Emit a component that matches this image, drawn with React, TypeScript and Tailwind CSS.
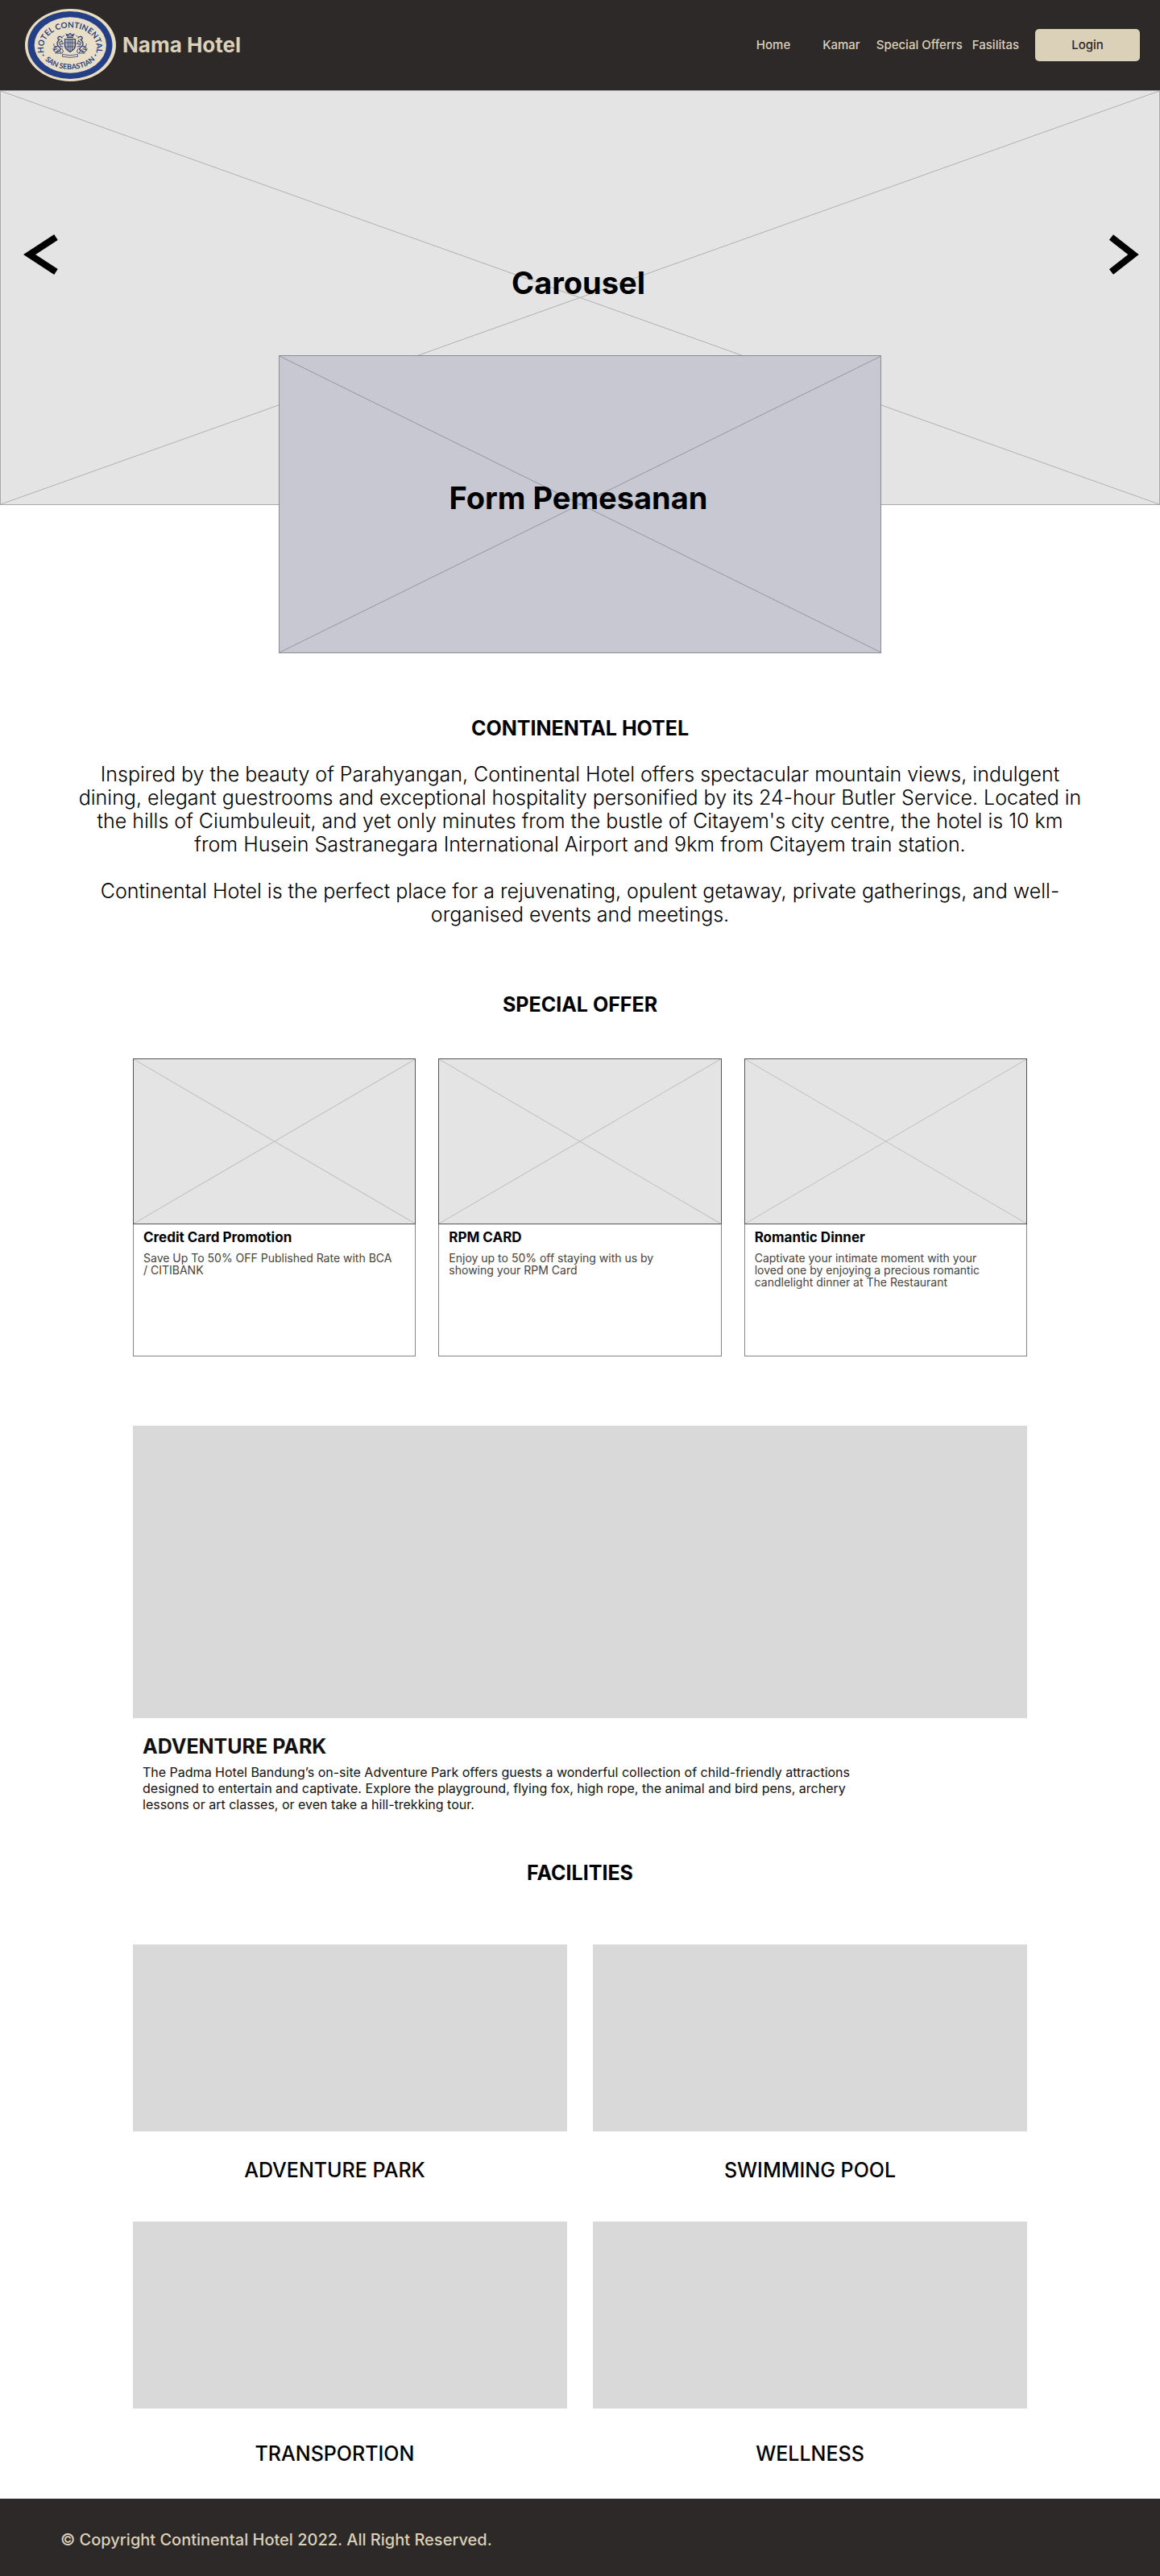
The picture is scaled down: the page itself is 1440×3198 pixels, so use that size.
import type { ReactNode } from "react";

const NAV = [
  { label: "Home", gap: "mr-10" },
  { label: "Kamar", gap: "mr-5" },
  { label: "Special Offerrs", gap: "mr-3" },
  { label: "Fasilitas", gap: "mr-5" },
];

const OFFERS = [
  { title: "Credit Card Promotion", lines: ["Save Up To 50% OFF Published Rate with BCA", "/ CITIBANK"] },
  { title: "RPM CARD", lines: ["Enjoy up to 50% off staying with us by", "showing your RPM Card"] },
  {
    title: "Romantic Dinner",
    lines: [
      "Captivate your intimate moment with your",
      "loved one by enjoying a precious romantic",
      "candlelight dinner at The Restaurant",
    ],
  },
];

const ABOUT = [
  [
    "Inspired by the beauty of Parahyangan, Continental Hotel offers spectacular mountain views, indulgent",
    "dining, elegant guestrooms and exceptional hospitality personified by its 24-hour Butler Service. Located in",
    "the hills of Ciumbuleuit, and yet only minutes from the bustle of Citayem's city centre, the hotel is 10 km",
    "from Husein Sastranegara International Airport and 9km from Citayem train station.",
  ],
  [
    "Continental Hotel is the perfect place for a rejuvenating, opulent getaway, private gatherings, and well-",
    "organised events and meetings.",
  ],
];

const PARK = [
  "The Padma Hotel Bandung’s on-site Adventure Park offers guests a wonderful collection of child-friendly attractions",
  "designed to entertain and captivate. Explore the playground, flying fox, high rope, the animal and bird pens, archery",
  "lessons or art classes, or even take a hill-trekking tour.",
];

function Lines({ lines }: { lines: string[] }) {
  return (
    <>
      {lines.map((line) => (
        <span key={line} className="block">
          {line}
        </span>
      ))}
    </>
  );
}

function Cross({ className }: { className: string }) {
  return (
    <svg className={`absolute inset-0 size-full ${className}`} viewBox="0 0 100 100" preserveAspectRatio="none" aria-hidden="true">
      <path d="M0 0 100 100M100 0 0 100" stroke="currentColor" fill="none" vectorEffect="non-scaling-stroke" />
    </svg>
  );
}

function SectionTitle({ children }: { children: ReactNode }) {
  return <h2 className="text-center text-[25px] leading-8 font-bold">{children}</h2>;
}

function Lion() {
  return (
    <g fill="none" stroke="#2c3a6e" strokeLinecap="round" strokeLinejoin="round">
      <path d="M77 47c-1.500-2-4-2-5-.4-.8 1.600.6 2.600 2 2.400M74 49c-2.500 2-3.500 4-2.800 6.500.8 2.500 3.200 3 4.300 5.500" strokeWidth="1.300" />
      <path d="M77 51l-3 1.500M79 54l-4.500 1M78 58l-3-.5M72 57c-2.500.5-4.500 3-4.500 5M75 61c-1 2.500-3 3.500-5.500 3.600M71 60c-1.500 1.800-2.500 2.300-4 2" strokeWidth="1.100" />
      <path d="M70 58c-3-.4-4.200-2-3-3.500M69 66h7M74 63l2 3M76 49.500l1.500 3.500M73 53l2 3.500" strokeWidth=".9" />
      <path d="M78 45.500l1.500-1.500M66 60.500c.3 2.300 1.600 4 3.500 4.500M72.500 61.500l-1.500 2M77 60.500l1.500 3.500-1.500 2M68.500 57.500l-1.800 1.500" strokeWidth=".9" />
    </g>
  );
}

function Logo() {
  return (
    <svg className="h-[90px] w-[113px] shrink-0" viewBox="31 11 113 90" role="img" aria-label="Hotel Continental San Sebastian">
      <defs>
        <path id="logo-top" d="M54.500 66C51 46 67 34.500 87 34.500S123 46 119.500 66" />
        <path id="logo-bottom" d="M54 72C62 82 74 86 87 86S112 82 120 72" />
      </defs>
      <ellipse cx="87.500" cy="56" rx="56.500" ry="45" fill="#e9ddc0" />
      <ellipse cx="87" cy="56" rx="52.500" ry="42" fill="#243f86" />
      <ellipse cx="87.300" cy="56" rx="44.700" ry="34.700" fill="#e9dfc8" />
      <g fill="#2a3f80" fontFamily="Lato" fontWeight="700" textAnchor="middle">
        <text fontSize="10">
          <textPath href="#logo-top" startOffset="50%">HOTEL CONTINENTAL</textPath>
        </text>
        <text fontSize="9">
          <textPath href="#logo-bottom" startOffset="50%">SAN SEBASTIAN</textPath>
        </text>
      </g>
      <circle cx="53.700" cy="68.500" r="1" fill="#2a3f80" />
      <circle cx="118.500" cy="68.500" r="1" fill="#2a3f80" />
      <Lion />
      <g transform="matrix(-1 0 0 1 174 0)">
        <Lion />
      </g>
      <g fill="none" stroke="#2c3a6e">
        <path d="M83 46.500h8M83.500 45l-1.200-2.500 2.400 1 2.300-2 2.300 2 2.400-1-1.200 2.500z" strokeWidth="1.100" />
        <path d="M80.500 48.500h13v8.500c0 3.500-3 5.500-6.500 7.500-3.500-2-6.500-4-6.500-7.500z" fill="#b4b1b2" strokeWidth="1.200" />
        <path d="M84.500 49v13M87 49v15M89.500 49v13M81 53h12M81 58h12" strokeWidth=".7" />
        <path d="M77.500 67.500q9.500 2.500 19 0v2.800q-9.500 2-19 0z" strokeWidth=".8" />
      </g>
    </svg>
  );
}

function Facility({ name, className }: { name: string; className: string }) {
  return (
    <figure>
      <div className="h-[232px] bg-[#d9d9d9]" />
      <figcaption className={`flex h-28 items-center justify-center text-[25px] leading-8 font-medium ${className}`}>{name}</figcaption>
    </figure>
  );
}

export default function App() {
  return (
    <div className="min-h-screen bg-white font-['Inter',sans-serif] text-black">
      <header className="flex h-28 items-center justify-between bg-[#2d2928] pr-[25px] pl-[31px] text-[#dbd0b8]">
        <a href="#home" className="flex items-center gap-2">
          <Logo />
          <span className="text-[26px] leading-8 font-bold">Nama Hotel</span>
        </a>
        <nav className="flex items-center text-[15px] font-medium">
          {NAV.map((item) => (
            <a key={item.label} href="#menu" className={item.gap}>
              {item.label}
            </a>
          ))}
          <button type="button" className="h-10 w-[130px] rounded-[5px] bg-[#dbd0b8] text-[#2d2928]">
            Login
          </button>
        </nav>
      </header>

      <main>
        <section className="relative flex h-[515px] items-center justify-between border border-[#a9a9a9] bg-[#e4e4e4] pr-6 pb-[107px] pl-7">
          <Cross className="text-[#b0b0b0]" />
          <button type="button" aria-label="Previous" className="relative">
            <svg className="h-[50px] w-11" viewBox="0 0 44 50" fill="none" stroke="black" strokeWidth="8.300" aria-hidden="true">
              <path d="M40.500 3.500 7.500 25l33 21.500" />
            </svg>
          </button>
          <h1 className="relative pt-[70px] pr-2 text-[38px] leading-[46px] font-bold">Carousel</h1>
          <button type="button" aria-label="Next" className="relative">
            <svg className="h-[50px] w-11" viewBox="0 0 44 50" fill="none" stroke="black" strokeWidth="8.300" aria-hidden="true">
              <path d="M8.500 3.500 36 25 8.500 46.500" />
            </svg>
          </button>
        </section>

        <section className="relative mx-auto -mt-[186px] flex h-[370px] w-[52%] items-center justify-center border border-[#8c8c95] bg-[#c8c8d2] pr-1 pb-4">
          <Cross className="text-[#96969f]" />
          <h2 className="relative text-[38px] leading-[46px] font-bold">Form Pemesanan</h2>
        </section>

        <section className="mt-[77px]">
          <SectionTitle>CONTINENTAL HOTEL</SectionTitle>
          <div className="mt-[27px] space-y-[29px] text-center text-[25px] leading-[29px] font-light">
            {ABOUT.map((lines) => (
              <p key={lines[0]}>
                <Lines lines={lines} />
              </p>
            ))}
          </div>
        </section>

        <section className="mx-auto mt-[81px] max-w-[1110px]">
          <SectionTitle>SPECIAL OFFER</SectionTitle>
          <div className="mt-[51px] grid grid-cols-3 gap-7">
            {OFFERS.map((offer) => (
              <article key={offer.title} className="h-[370px] border border-[#858585]">
                <div className="relative -mx-px -mt-px h-[206px] border border-[#555555] bg-[#e4e4e4]">
                  <Cross className="text-[#c0c0c0]" />
                </div>
                <div className="px-3 pt-1.5">
                  <h3 className="text-[17px] leading-5 font-bold">{offer.title}</h3>
                  <p className="mt-2 text-[14px] leading-[15px] whitespace-nowrap text-[#444444]">
                    <Lines lines={offer.lines} />
                  </p>
                </div>
              </article>
            ))}
          </div>
        </section>

        <section className="mx-auto mt-[86px] max-w-[1110px]">
          <div className="h-[363px] bg-[#d9d9d9]" />
          <div className="mt-[19px] px-3">
            <h2 className="text-[25px] leading-8 font-bold text-[#111111]">ADVENTURE PARK</h2>
            <p className="mt-1.5 text-[16px] leading-5 text-[#111111]">
              <Lines lines={PARK} />
            </p>
          </div>
        </section>

        <section className="mx-auto mt-[59px] max-w-[1110px]">
          <SectionTitle>FACILITIES</SectionTitle>
          <div className="mt-[73px] grid grid-cols-2 gap-x-8">
            <Facility name="ADVENTURE PARK" className="pr-[38px] pb-4" />
            <Facility name="SWIMMING POOL" className="pb-4" />
            <Facility name="TRANSPORTION" className="pr-[38px]" />
            <Facility name="WELLNESS" className="" />
          </div>
        </section>
      </main>

      <footer className="flex h-24 items-center bg-[#2d2928] px-[75px] pt-1.5 text-[20px] leading-6 font-medium text-[#dbd0b8]">
        <p>© Copyright Continental Hotel 2022. All Right Reserved.</p>
      </footer>
    </div>
  );
}
